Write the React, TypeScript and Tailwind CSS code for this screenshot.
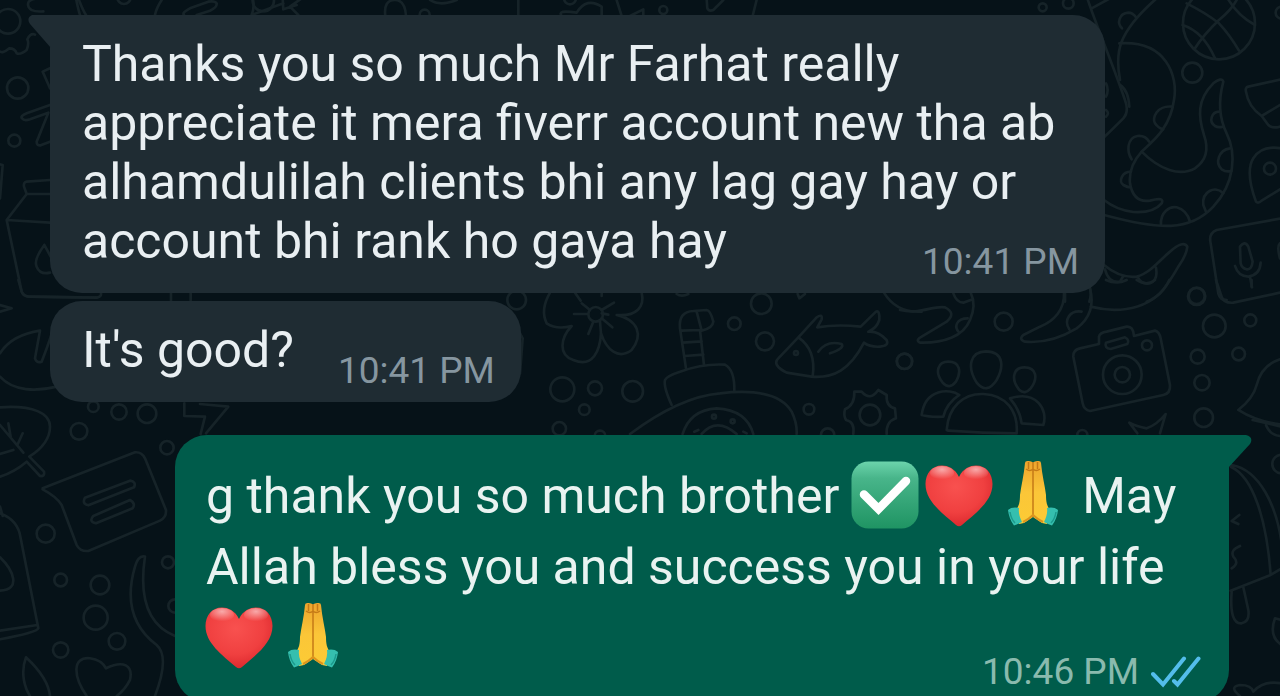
import React, { useId } from 'react';

interface DoodleGroup {
  transform: string;
  circles: [number, number, number][];
  paths: string[];
}

// Wallpaper doodles, each group drawn at three times its final size
const doodles: DoodleGroup[] = [
  {
    transform: 'scale(0.3333)',
    circles: [[24, 64, 37], [53, 264, 32], [43, 422, 18], [372, -8, 20], [790, 2, 32]],
    paths: [
      'M-5 150 Q5 165 28 145 Q45 145 50 160 Q62 165 80 150 Q88 130 82 118 Q92 98 105 104 M125 -5 Q85 -5 84 12 Q84 38 130 34',
      'M228 -5 Q235 30 240 45 M235 -5 Q248 30 258 45',
      'M492 -10 Q470 20 465 45 M552 45 Q545 38 570 25 L625 5 Q645 2 650 10 Q652 22 630 32 L590 45',
      'M758 -5 Q765 20 755 45 M755 45 L850 10 M848 -5 L850 28 L890 15 M905 -5 L870 20 L895 45',
      'M150 315 L80 340 Q60 348 66 355 Q72 364 90 358 L145 338 L110 425 Q110 438 122 436 L150 425',
      'M150 205 L128 215 L150 265',
      'M-5 492 L8 495 L0 595',
      'M150 540 L80 545 Q70 546 72 560 L80 582 L150 582 M80 582 L20 660 L150 668 M20 660 L65 875 Q70 888 85 890 L290 893 Q310 890 300 870',
      'M133 735 Q100 780 110 800 Q120 825 150 818 M133 735 L152 770',
    ],
  },
  {
    transform: 'translate(1000 0) scale(0.3333)',
    circles: [[657, 70, 108], [577, 218, 30], [810, 506, 18], [590, 888, 24], [205, 10, 16], [128, 22, 12], [845, 38, 18]],
    paths: [
      'M262 -5 C290 80 330 170 375 300 Q388 335 370 355 Q345 380 312 412 M275 25 L330 -5',
      'M470 -5 C350 100 345 160 360 240 M360 255 Q385 270 388 320 M358 130 C500 120 535 230 522 300 C510 390 450 430 425 455 Q385 500 390 550 Q400 610 450 602 Q495 590 485 610 Q460 640 400 636 Q350 630 312 600',
      'M425 455 C480 510 540 530 585 505 Q635 470 612 405 C595 350 590 300 640 250 Q665 230 670 245 C650 320 665 370 680 400 C710 460 705 550 640 620 C570 695 480 690 312 645',
      'M366 85 C350 70 357 40 385 38 Q398 38 408 52 M518 320 C470 315 455 355 465 370 Q475 385 490 388 M448 425 Q435 405 412 408 C380 415 380 455 395 478 M393 515 C365 515 355 545 370 555 Q382 562 392 562',
      'M658 335 C635 335 625 365 645 378 Q655 384 668 380 M690 445 C655 450 645 490 665 508 Q680 518 695 512 M670 580 C645 555 605 575 610 615 L618 635 M483 675 C480 635 510 618 530 622 Q560 630 570 665 M318 250 Q328 270 318 290 M318 330 Q330 340 318 350',
      'M560 10 Q620 40 657 70 Q690 105 717 152 M548 75 Q610 95 645 175 M715 -10 Q700 25 657 60 Q610 105 585 145 M680 -10 Q710 45 765 75',
      'M845 238 L745 260 Q735 262 738 275 Q745 320 785 348 L845 312 M785 348 L805 375 Q818 388 845 378',
      'M845 445 Q785 435 760 475 Q735 515 768 605 Q775 612 785 602 L845 565',
      'M845 655 L650 690 Q625 700 632 730 L655 880 Q660 900 680 900 M840 730 Q830 740 840 775',
      'M720 740 Q735 720 745 740 L758 785 Q755 810 740 808 Q725 805 722 790 Z M705 798 Q715 830 745 830 Q780 825 782 788 M750 830 L756 862',
      'M312 795 Q360 835 410 830 C450 820 480 780 510 755 Q550 720 562 740 Q560 765 535 800 C500 860 480 890 440 905 M315 808 Q325 850 360 845 L370 828 M412 830 Q425 855 450 850 Q475 840 468 803',
      'M195 880 L195 905 M270 865 Q275 885 268 905',
    ],
  },
  {
    transform: 'translate(520 280) scale(0.3333)',
    circles: [[227, 103, 22], [127, 328, 36], [225, 325, 21], [338, 334, 31], [193, 389, 16], [118, 446, 20], [724, 71, 31], [643, 131, 19], [735, 184, 27], [867, 388, 16], [1153, 244, 23], [1050, 405, 31], [828, 219, 6], [582, 410, 6], [638, 424, 6], [-10, 60, 28], [923, 465, 20], [240, 468, 16]],
    paths: [
      'M165 38 L182 62 M90 38 Q60 90 80 130 Q110 150 155 138 C120 175 115 225 160 240 C220 265 240 210 243 160 C260 210 295 240 335 210 C370 165 355 120 290 105 C350 110 375 80 365 38 M245 38 L245 48',
      'M162 102 H202 M185 70 L210 90 M245 90 L282 68 M245 115 L277 142 M220 125 L205 162 M245 100 L265 104 M240 125 L243 160',
      'M498 265 L480 145 Q475 95 520 93 L560 90 Q572 92 580 125 Q578 145 545 152 L530 95 M540 150 L552 255 M485 152 L540 150 M488 188 L545 184 M494 228 L550 224',
      'M455 375 Q430 320 435 300 Q440 288 480 275 Q550 250 615 254 Q645 270 643 335',
      'M330 462 Q480 350 600 340 Q770 320 815 395 Q832 430 830 462 M488 462 Q510 390 590 385 Q680 390 700 462 M545 462 Q590 410 650 462 M523 455 L535 450 M670 455 L680 460',
      'M835 172 L890 112 Q908 100 905 118 L892 142 Q950 132 1022 140 L1068 95 Q1080 90 1078 120 Q1070 145 1045 155 Q1075 152 1100 180 Q1108 198 1080 200 Q1050 202 1032 188 C990 270 940 295 875 290 L800 278 Q755 255 775 235 L835 172 Q890 210 878 290 M895 215 Q920 180 965 192 Q975 205 930 220',
      'M1003 335 L1025 335 Q1050 365 1075 330 L1100 345 Q1098 380 1125 385 L1128 415 Q1098 425 1100 462 M1003 335 Q1005 375 975 388 Q970 405 978 420 Q1005 425 1000 462',
      'M1092 38 Q1130 100 1205 95 M470 42 Q485 52 505 42 M833 42 L838 55 L855 42 M-5 150 L8 175 L0 280',
    ],
  },
  {
    transform: 'translate(900 280) scale(0.3333)',
    circles: [[311, 125, 27], [14, 244, 23], [667, 284, 58], [667, 284, 23], [741, 196, 15], [890, 49, 26], [943, 138, 34], [1051, 121, 18], [893, 230, 21], [1016, 222, 19], [906, 308, 23], [911, 413, 28], [547, 465, 15], [1145, 552, 28]],
    paths: [
      'M0 90 C60 105 100 75 135 82 Q170 100 140 125 L65 170 Q45 180 60 188 C130 190 190 170 210 120 Q230 75 212 38 M160 40 Q170 68 190 68 L212 60 M203 115 C170 115 160 140 178 158',
      'M492 38 C495 90 460 125 420 140 L370 165 Q355 178 375 185 C430 190 480 175 530 145 Q590 100 570 25 M545 95 C510 90 490 120 508 148 M572 80 C670 105 770 80 808 0',
      'M618 0 Q650 15 680 0 M710 0 Q740 20 765 0 M948 0 L965 50 Q970 70 1000 68 L1140 38 M1055 0 V20',
      'M258 214 C315 215 310 265 290 300 Q260 345 230 308 C200 260 210 215 258 214 Z M145 245 C180 245 185 275 168 305 Q148 330 128 308 C102 275 115 245 145 245 Z M373 262 C410 262 415 295 392 325 Q375 345 358 330 C330 295 342 262 373 262 Z',
      'M140 450 C145 380 190 340 250 342 C320 345 355 395 350 460 Q250 460 145 452 Z M178 345 C150 325 75 325 65 405 Q90 412 130 410 Q140 370 178 345 Z M330 355 Q360 390 365 430 L430 435 C445 390 410 330 330 355 Z',
      'M520 230 Q518 210 540 205 L597 192 V170 Q600 158 620 155 L680 140 Q700 138 702 168 L765 152 Q778 155 782 175 L810 315 Q812 340 790 345 L570 393 Q552 390 548 370 Z M618 188 L675 172 Q690 180 682 192 L632 207 Q612 205 618 188 Z',
      'M780 460 L797 402 Q770 435 740 445 Q710 440 688 428 L712 460',
      'M1140 238 Q1085 255 1070 315 Q1060 355 1015 390 Q1070 425 1140 433 M1098 435 Q1110 465 1140 468',
    ],
  },
  {
    transform: 'translate(0 280) scale(0.3333)',
    circles: [[280, 380, 16], [357, 396, 23], [441, 401, 28], [237, 454, 25], [501, 503, 20], [137, 761, 27], [504, 847, 18], [182, 900, 19], [300, 915, 28], [287, 1013, 36], [351, 1084, 25], [182, 1110, 23], [525, 978, 20]],
    paths: [
      'M55 0 L65 35 Q70 50 90 50 L290 53 M0 75 L35 85 L0 95 M513 38 V62 M572 38 V62',
      'M0 220 Q35 165 120 152 L105 235 Q110 250 125 245 Q150 180 155 160 M0 290 C40 335 110 335 170 320',
      'M0 382 C100 375 150 400 150 440 Q150 490 88 530 L132 575 Q135 590 120 588 L80 545 Q45 575 0 590 M0 435 L70 518 M25 430 L32 470 M68 460 L52 495 M0 522 L40 510',
      'M553 370 V408 L615 410 L602 462 M618 460 L685 380 L600 372',
      'M128 625 L405 517 Q425 515 435 535 L498 690 Q500 712 480 722 L265 813 Q240 815 230 795 L185 675 Q170 650 128 628 M255 653 L390 602 Q410 605 402 622 L265 676 Q245 672 255 653 Z M280 708 L390 660 Q408 670 398 685 L288 730 Q265 725 280 708 Z',
      'M0 700 Q55 720 62 775 L115 1045 Q110 1058 0 1078 M0 1052 L112 1035 M0 832 C40 870 65 930 0 932 M0 680 L8 708',
      'M435 830 Q415 825 405 860 C370 980 410 1050 470 1095 Q510 1130 465 1248 M435 830 C420 930 430 1030 525 1068',
      'M78 1132 C60 1180 75 1225 90 1248 M78 1132 Q145 1195 150 1248 M260 1248 C220 1190 215 1130 270 1135 Q305 1140 318 1165 C370 1140 400 1155 390 1200 Q375 1230 350 1248',
    ],
  },
  {
    transform: 'translate(1160 420) scale(0.3333)',
    circles: [],
    paths: [
      'M212 140 C280 170 320 300 332 465 L212 512 M215 135 C300 150 350 260 365 370 M332 465 L365 445',
      'M238 285 L215 303 L235 312 M240 378 Q210 390 220 410 Q240 430 215 445 M215 515 C210 580 220 612 245 610 Q270 605 265 570 L250 502 M365 600 L345 595 Q325 650 365 675',
      'M240 828 Q205 800 240 795 Q275 795 280 815 Q310 780 365 790 M278 0 L365 20',
    ],
  },
  {
    transform: 'translate(380 0) scale(0.3333)',
    circles: [[134, 44, 15], [570, -5, 18], [850, 30, 12]],
    paths: [
      'M16 48 Q10 0 45 0 Q75 0 78 48 M150 0 Q180 20 230 0 M415 0 V48 M545 48 Q530 28 590 38 Q620 -10 665 20 V48 M710 0 L725 48',
      'M750 48 L790 28 V45 M980 -5 L982 25 Q986 35 1000 30 L1030 0 M1130 0 L1118 48',
    ],
  },
];

const Wallpaper: React.FC = () => (
  <svg
    aria-hidden="true"
    viewBox="0 0 1280 696"
    preserveAspectRatio="xMidYMid slice"
    className="absolute inset-0 h-full w-full"
    fill="none"
    stroke="#162328"
    strokeWidth={8}
    strokeLinecap="round"
    strokeLinejoin="round"
  >
    {doodles.map((group) => (
      <g key={group.transform} transform={group.transform}>
        {group.circles.map(([cx, cy, r]) => (
          <circle key={`${cx}-${cy}-${r}`} cx={cx} cy={cy} r={r} />
        ))}
        {group.paths.map((d) => (
          <path key={d} d={d} />
        ))}
      </g>
    ))}
  </svg>
);

const CheckEmoji: React.FC = () => {
  const id = useId();
  return (
    <svg role="img" aria-label="check mark" viewBox="0 0 74 74" className="inline-block h-[74px] w-[74px] -my-2 align-[-11px]">
      <defs>
        <linearGradient id={id} x1="0" y1="0" x2="0" y2="1">
          <stop offset="0" stopColor="#6cd4ac" />
          <stop offset="0.25" stopColor="#48b58a" />
          <stop offset="1" stopColor="#1f9463" />
        </linearGradient>
      </defs>
      <rect x="3.5" y="3.5" width="67" height="67" rx="17" fill={`url(#${id})`} />
      <path d="M16 36.5 L30.5 51 L58 23" fill="none" stroke="#fff" strokeWidth="8.5" strokeLinecap="round" strokeLinejoin="miter" />
    </svg>
  );
};

const HeartEmoji: React.FC = () => {
  const id = useId();
  return (
    <svg role="img" aria-label="red heart" viewBox="0 0 74 74" className="inline-block h-[74px] w-[74px] -my-2 align-[-11px]">
      <defs>
        <radialGradient id={`${id}-body`} cx="0.45" cy="0.35" r="0.7">
          <stop offset="0" stopColor="#f8514f" />
          <stop offset="0.6" stopColor="#f04040" />
          <stop offset="1" stopColor="#d9252b" />
        </radialGradient>
        <radialGradient id={`${id}-shine`} cx="0.5" cy="0.25" r="0.7">
          <stop offset="0" stopColor="#fff" stopOpacity="0.55" />
          <stop offset="1" stopColor="#fff" stopOpacity="0" />
        </radialGradient>
      </defs>
      <path
        d="M37 19 C33 10.500 26 7.500 20 7.500 C10 7.500 3.500 15.500 3.500 26 C3.500 43 20 55 34 67 Q37 69.500 40 67 C54 55 70.500 43 70.500 26 C70.500 15.500 64 7.500 54 7.500 C48 7.500 41 10.500 37 19 Z"
        fill={`url(#${id}-body)`}
      />
      <ellipse cx="20" cy="15" rx="12" ry="7" fill={`url(#${id}-shine)`} />
      <ellipse cx="54" cy="15" rx="12" ry="7" fill={`url(#${id}-shine)`} />
    </svg>
  );
};

const PrayEmoji: React.FC = () => {
  const id = useId();
  return (
    <svg role="img" aria-label="folded hands" viewBox="0 0 74 74" className="inline-block h-[74px] w-[74px] -my-2 align-[-11px]">
      <defs>
        <linearGradient id={id} x1="0" y1="0" x2="0" y2="1">
          <stop offset="0" stopColor="#eda42d" />
          <stop offset="0.5" stopColor="#fbc638" />
          <stop offset="1" stopColor="#fccb35" />
        </linearGradient>
      </defs>
      <path
        d="M29 5 Q29 3 31.500 3 Q35 2.500 37 4.500 Q39 2.500 42.500 3 Q45 3 45 5 C46 17 49 28 50 37 C50 44 51 48 54 52 L51 66 L46 65 Q40 61 37 59 Q34 61 28 65 L23 66 L20 52 C23 48 24 44 24 37 C25 28 28 17 29 5 Z"
        fill={`url(#${id})`}
      />
      <path d="M37 4 V59 M30 11 Q34 14 37 11 Q40 14 44 11 M32.500 4 V11 M41.500 4 V11" fill="none" stroke="#c57a17" strokeWidth="1.500" />
      <path d="M27 64 Q33 61 37 57 Q41 61 47 64" fill="none" stroke="#dc951f" strokeWidth="2" />
      <path d="M12 52 Q16 48.500 23 50 Q22 56 26 64 Q22 66 18 67.500 Q13 61 12 52 Z" fill="#35bfae" />
      <path d="M62 52 Q58 48.500 51 50 Q52 56 48 64 Q52 66 56 67.500 Q61 61 62 52 Z" fill="#35bfae" />
      <path d="M14 54 Q15 61 19 65 M60 54 Q59 61 55 65" fill="none" stroke="#1c998c" strokeWidth="1.500" />
    </svg>
  );
};

const ReadTicks: React.FC = () => (
  <svg role="img" aria-label="Read" viewBox="0 0 50 32" className="h-8 w-[50px]" fill="none" stroke="#53bdeb" strokeWidth="4" strokeLinecap="round">
    <path d="M2 18 L12 28.500 L33 2.500 M23 25 L26.500 28.500 L47.500 2.500" />
  </svg>
);

interface BubbleProps {
  time: string;
  outgoing?: boolean;
  tail?: boolean;
  children: React.ReactNode;
}

const Bubble: React.FC<BubbleProps> = ({ time, outgoing, tail, children }) => {
  if (outgoing) {
    return (
      <article className="relative mt-[33px] w-full max-w-[1054px] self-end rounded-[32px] rounded-tr-none bg-[#005c4b] pt-[26px] pr-7 pb-2 pl-[31px] text-[#e9f3f1]">
        <svg aria-hidden="true" viewBox="0 0 24 34" className="absolute top-0 left-full h-[34px] w-6 -ml-px">
          <path d="M0 0 H18 Q26 2 22 9 L0 33 Z" fill="#005c4b" />
        </svg>
        <p className="text-[50px] leading-[71px]">{children}</p>
        <div className="-mt-6 flex items-center justify-end gap-3 text-[37px] leading-[44px] text-[#8abaae]">
          <time>{time}</time>
          <ReadTicks />
        </div>
      </article>
    );
  }

  return (
    <article className={`relative flow-root w-fit max-w-[1055px] rounded-[32px] bg-[#1f2c33] pt-5 pr-[26px] pb-[22px] pl-8 text-[#e9eff2] ${tail ? 'rounded-tl-none' : 'mt-2'}`}>
      {tail && (
        <svg aria-hidden="true" viewBox="0 0 24 34" className="absolute top-0 right-full h-[34px] w-6 -mr-px">
          <path d="M24 0 H5 Q-1 3 3 9 L24 33 Z" fill="#1f2c33" />
        </svg>
      )}
      <p className="text-[50px] leading-[59px]">
        {children}
        <time className="float-right -mb-4 ml-11 pt-7 text-[37px] leading-[44px] text-[#8696a0]">{time}</time>
      </p>
    </article>
  );
};

const App: React.FC = () => {
  return (
    <main className="relative h-screen overflow-hidden bg-[#061218] font-['Roboto',sans-serif]">
      <Wallpaper />
      <section aria-label="Conversation" className="relative flex flex-col pt-[15px] pr-[51px] pl-[50px]">
        <Bubble time="10:41 PM" tail>
          Thanks you so much Mr Farhat really appreciate it mera fiverr account new tha ab alhamdulilah clients bhi any lag gay hay or account bhi rank ho gaya hay
        </Bubble>
        <Bubble time="10:41 PM">It's good?</Bubble>
        <Bubble time="10:46 PM" outgoing>
          g thank you so much brother <span className="-ml-1 whitespace-nowrap"><CheckEmoji /><HeartEmoji /><PrayEmoji /></span> May Allah bless you and success you in your life{' '}
          <span className="-ml-1 whitespace-nowrap"><HeartEmoji /><PrayEmoji /></span>
        </Bubble>
      </section>
    </main>
  );
};

export default App;
